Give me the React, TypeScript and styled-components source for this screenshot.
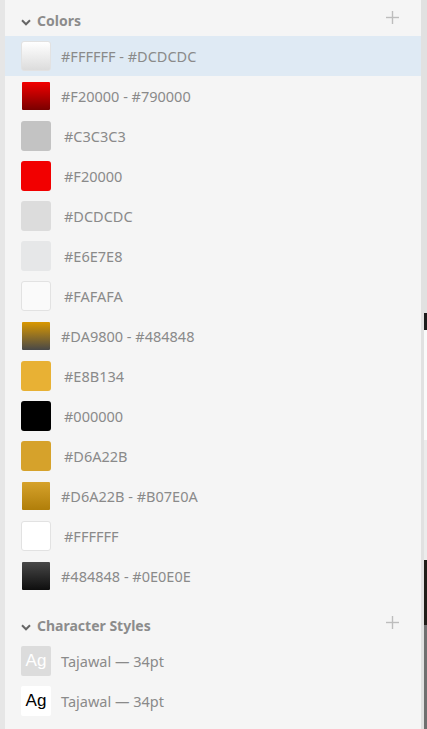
import React from "react";
import styled, { createGlobalStyle } from "styled-components";

const Global = createGlobalStyle`
  html, body { margin: 0; padding: 0; background: #f5f5f5; }
  body { font-family: "Noto Sans", "Open Sans", sans-serif; }
  #root { height: 729px; overflow: hidden; }
`;

const Shell = styled.div`
  display: flex;
  height: 729px;
  width: 427px;
`;

const LeftEdge = styled.div`
  width: 5px;
  flex: none;
  background: #e6e6e6;
`;

const Panel = styled.div`
  flex: 1;
  background: #f5f5f5;
  display: flex;
  flex-direction: column;
  min-width: 0;
`;

const RightEdge = styled.div`
  width: 3px;
  flex: none;
  background: #e1e1e1;
`;

const Canvas = styled.div`
  width: 3px;
  flex: none;
  display: flex;
  flex-direction: column;
`;

const CanvasBand = styled.div<{ $h: number; $c: string }>`
  height: ${(p) => p.$h}px;
  flex: none;
  background: ${(p) => p.$c};
`;

const Section = styled.section<{ $gap?: number }>`
  margin-top: ${(p) => p.$gap ?? 0}px;
  display: flex;
  flex-direction: column;
`;

const Header = styled.div`
  height: 36px;
  box-sizing: border-box;
  padding: 12px 22px 6px 16px;
  display: flex;
  align-items: center;
`;

const Chevron = styled.svg`
  width: 10px;
  height: 7px;
  margin-top: 2px;
  flex: none;
`;

const Title = styled.span`
  margin-left: 6px;
  font-size: 14px;
  line-height: 18px;
  font-weight: 700;
  color: #8c8c8c;
  flex: 1;
`;

const Plus = styled.svg`
  width: 13px;
  height: 13px;
  align-self: flex-start;
  margin-top: -1px;
  flex: none;
`;

const Row = styled.div<{ $selected?: boolean }>`
  height: 40px;
  padding-left: 16px;
  display: flex;
  align-items: center;
  background: ${(p) => (p.$selected ? "#dfeaf4" : "transparent")};
`;

const SwatchBox = styled.div`
  width: 30px;
  height: 30px;
  flex: none;
  display: flex;
  align-items: center;
  justify-content: center;
`;

const Swatch = styled.div<{ $bg: string; $size: number; $border?: boolean; $radius: number }>`
  width: ${(p) => p.$size}px;
  height: ${(p) => p.$size}px;
  box-sizing: border-box;
  border-radius: ${(p) => p.$radius}px;
  background: ${(p) => p.$bg};
  border: ${(p) => (p.$border ? "1px solid #e2e2e2" : "none")};
`;

const Label = styled.span<{ $indent: number }>`
  margin-left: ${(p) => 10 + p.$indent}px;
  font-size: 14.5px;
  line-height: 18px;
  margin-top: -1px;
  color: #8a8a8a;
  white-space: nowrap;
`;

const TypeSwatch = styled.div<{ $bg: string; $fg: string }>`
  width: 30px;
  height: 30px;
  flex: none;
  border-radius: 2px;
  background: ${(p) => p.$bg};
  color: ${(p) => p.$fg};
  font-family: "Liberation Sans", Arial, sans-serif;
  font-size: 17px;
  display: flex;
  align-items: center;
  justify-content: center;
`;

type ColorItem = { from: string; to?: string; border?: boolean };

const colors: ColorItem[] = [
  { from: "#FFFFFF", to: "#DCDCDC", border: true },
  { from: "#F20000", to: "#790000" },
  { from: "#C3C3C3" },
  { from: "#F20000" },
  { from: "#DCDCDC" },
  { from: "#E6E7E8" },
  { from: "#FAFAFA", border: true },
  { from: "#DA9800", to: "#484848" },
  { from: "#E8B134" },
  { from: "#000000" },
  { from: "#D6A22B" },
  { from: "#D6A22B", to: "#B07E0A" },
  { from: "#FFFFFF", border: true },
  { from: "#484848", to: "#0E0E0E" },
];

const ChevronIcon = () => (
  <Chevron viewBox="0 0 10 7">
    <polyline points="1,1.3 5,5.3 9,1.3" fill="none" stroke="#666666" strokeWidth="2" />
  </Chevron>
);

const PlusIcon = () => (
  <Plus viewBox="0 0 13 13">
    <line x1="6.5" y1="0" x2="6.5" y2="13" stroke="#bdbdbd" strokeWidth="1.4" />
    <line x1="0" y1="6.5" x2="13" y2="6.5" stroke="#bdbdbd" strokeWidth="1.4" />
  </Plus>
);

export default function App() {
  return (
    <>
      <Global />
      <Shell>
        <LeftEdge />
        <Panel>
          <Section>
            <Header>
              <ChevronIcon />
              <Title>Colors</Title>
              <PlusIcon />
            </Header>
            {colors.map((c, i) => {
              const grad = !!c.to;
              const first = i === 0;
              const bg = grad ? `linear-gradient(to bottom, ${c.from}, ${c.to})` : c.from;
              const size = grad && !first ? 28 : 30;
              return (
                <Row key={i} $selected={first}>
                  <SwatchBox>
                    <Swatch $bg={bg} $size={size} $border={c.border} $radius={grad && !first ? 1 : 3} />
                  </SwatchBox>
                  <Label $indent={grad ? 0 : 3}>
                    {grad ? `${c.from} - ${c.to}` : c.from}
                  </Label>
                </Row>
              );
            })}
          </Section>
          <Section $gap={9}>
            <Header>
              <ChevronIcon />
              <Title>Character Styles</Title>
              <PlusIcon />
            </Header>
            <Row>
              <TypeSwatch $bg="#dcdcdc" $fg="#ffffff">Ag</TypeSwatch>
              <Label $indent={0}>Tajawal — 34pt</Label>
            </Row>
            <Row>
              <TypeSwatch $bg="#ffffff" $fg="#000000">Ag</TypeSwatch>
              <Label $indent={0}>Tajawal — 34pt</Label>
            </Row>
          </Section>
        </Panel>
        <RightEdge />
        <Canvas>
          <CanvasBand $h={313} $c="#e1e1e1" />
          <CanvasBand $h={17} $c="#1c1c1c" />
          <CanvasBand $h={110} $c="#fafafa" />
          <CanvasBand $h={120} $c="#ececec" />
          <CanvasBand $h={65} $c="#201d18" />
          <CanvasBand $h={104} $c="#6f6f6f" />
        </Canvas>
      </Shell>
    </>
  );
}
